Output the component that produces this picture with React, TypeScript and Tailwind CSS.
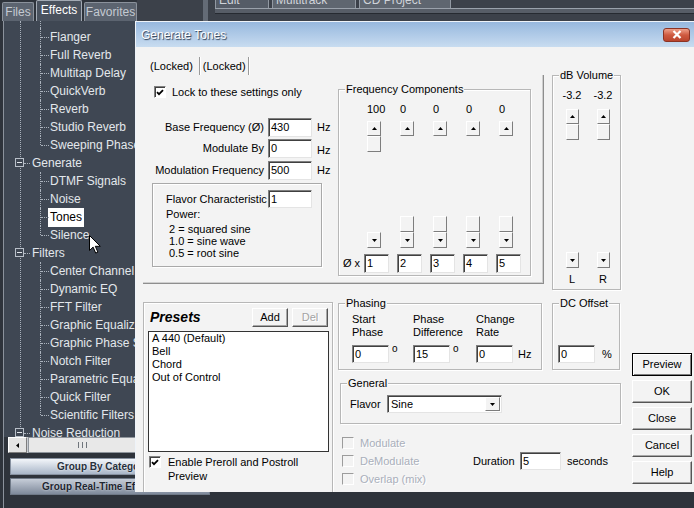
import React from 'react';

type Kids = { children?: React.ReactNode; className?: string };

function Arrow({ down = false }: { down?: boolean }) {
  return (
    <svg width="5" height="3" viewBox="0 0 5 3">
      <path d={down ? 'M0 0h5L2.5 3z' : 'M0 3h5L2.5 0z'} fill="#000" />
    </svg>
  );
}

function Raised({ children, className = '' }: Kids) {
  return (
    <div className={`flex items-center justify-center border border-t-white border-l-white border-r-[#7d7d7d] border-b-[#7d7d7d] bg-[#f3f3f3] ${className}`}>
      {children}
    </div>
  );
}

function PushButton({ children, className = '', isDefault = false, disabled = false }: Kids & { isDefault?: boolean; disabled?: boolean }) {
  const frame = isDefault
    ? 'border-black shadow-[inset_1px_1px_0_#fff,inset_-1px_-1px_0_#7d7d7d]'
    : 'border-t-white border-l-white border-r-[#555] border-b-[#555] shadow-[inset_-1px_-1px_0_#a8a8a8]';
  return (
    <div className={`flex items-center justify-center border bg-[#f3f3f3] ${frame} ${disabled ? 'text-[#a3a3a3] [text-shadow:1px_1px_0_#fff]' : ''} ${className}`}>
      {children}
    </div>
  );
}

function Field({ value, className = '' }: { value: string; className?: string }) {
  return (
    <div className={`border border-t-[#7f7f7f] border-l-[#7f7f7f] border-r-[#e4e4e4] border-b-[#e4e4e4] bg-white pl-[2px] leading-[16px] shadow-[inset_1px_1px_0_#404040] ${className}`}>
      {value}
    </div>
  );
}

function Check({ checked = false, disabled = false }: { checked?: boolean; disabled?: boolean }) {
  return (
    <div
      className={`flex h-[12px] w-[12px] shrink-0 items-center justify-center border ${
        disabled
          ? 'border-t-[#9c9c9c] border-l-[#9c9c9c] border-r-white border-b-white bg-[#f3f3f3]'
          : 'border-t-[#808080] border-l-[#808080] border-r-white border-b-white bg-white shadow-[inset_1px_1px_0_#404040]'
      }`}
    >
      {checked && (
        <svg width="8" height="7" viewBox="0 0 8 7">
          <path d="M1 3.2l2 2 4-4" stroke="#000" strokeWidth="1.8" fill="none" />
        </svg>
      )}
    </div>
  );
}

function Group({ label, className = '', children }: Kids & { label?: string }) {
  return (
    <div className={`relative border border-[#b7b7b7] shadow-[inset_1px_1px_0_#fff,1px_1px_0_#fff] ${className}`}>
      {label && <span className="absolute left-[6px] top-[-8px] bg-[#f3f3f3] px-[1px] leading-[14px]">{label}</span>}
      {children}
    </div>
  );
}

function Slider({ thumbTop = false, className = '' }: { thumbTop?: boolean; className?: string }) {
  return (
    <div className={`flex flex-col ${className}`}>
      <Raised className="h-[15px]">
        <Arrow />
      </Raised>
      <div className={`flex flex-1 flex-col ${thumbTop ? 'justify-start' : 'justify-end'}`}>
        <Raised className="h-[16px]" />
      </div>
      <Raised className="h-[16px]">
        <Arrow down />
      </Raised>
    </div>
  );
}

type Row = { t: string; g?: boolean; last?: boolean; sel?: boolean };

const rows: Row[] = [
  { t: 'Flanger' },
  { t: 'Full Reverb' },
  { t: 'Multitap Delay' },
  { t: 'QuickVerb' },
  { t: 'Reverb' },
  { t: 'Studio Reverb' },
  { t: 'Sweeping Phase', last: true },
  { t: 'Generate', g: true },
  { t: 'DTMF Signals' },
  { t: 'Noise' },
  { t: 'Tones', sel: true },
  { t: 'Silence', last: true },
  { t: 'Filters', g: true },
  { t: 'Center Channel' },
  { t: 'Dynamic EQ' },
  { t: 'FFT Filter' },
  { t: 'Graphic Equalizer' },
  { t: 'Graphic Phase Shifter' },
  { t: 'Notch Filter' },
  { t: 'Parametric Equalizer' },
  { t: 'Quick Filter' },
  { t: 'Scientific Filters', last: true },
  { t: 'Noise Reduction', g: true },
];

function Tree() {
  return (
    <div className="relative h-[416px] shrink-0 overflow-hidden bg-[#3f4753] pt-[7px] text-[12px] text-[#e3e7ec]">
      <span className="absolute bottom-0 left-[16px] top-0 border-l border-dotted border-[#aab2bc]" />
      <span className="absolute left-[36px] top-0 h-[7px] border-l border-dotted border-[#aab2bc]" />
      {rows.map((r) =>
        r.g ? (
          <div key={r.t} className="relative flex h-[18px] items-center whitespace-nowrap pl-[28px]">
            <span className="absolute left-[11px] top-[4px] flex h-[9px] w-[9px] items-center justify-center border border-[#b9c0c9] bg-[#3f4753]">
              <span className="h-px w-[5px] bg-[#e3e7ec]" />
            </span>
            <span className="absolute left-[20px] top-[9px] w-[6px] border-t border-dotted border-[#aab2bc]" />
            {r.t}
          </div>
        ) : (
          <div key={r.t} className="relative flex h-[18px] items-center whitespace-nowrap pl-[46px]">
            <span className={`absolute left-[36px] top-0 border-l border-dotted border-[#aab2bc] ${r.last ? 'h-[9px]' : 'h-full'}`} />
            <span className="absolute left-[37px] top-[9px] w-[8px] border-t border-dotted border-[#aab2bc]" />
            {r.sel ? (
              <span className="-ml-[2px] bg-white px-[2px] leading-[19px] text-black">{r.t}</span>
            ) : (
              r.t
            )}
          </div>
        )
      )}
      <svg className="absolute left-[85px] top-[214px]" width="13" height="19" viewBox="0 0 13 19">
        <path d="M0.5 0.5v15l3.6-3.4 2.6 6 2.2-1-2.6-5.8h5z" fill="#fff" stroke="#000" strokeWidth="1" />
      </svg>
    </div>
  );
}

function LeftPanel() {
  return (
    <div className="flex w-[137px] shrink-0 flex-col">
      <div className="flex h-[21px] shrink-0 items-end text-[12px]">
        <div className="ml-[2px] h-[19px] w-[32px] rounded-t-[2px] border border-b-0 border-[#8b929c] bg-[#5c6470] text-center leading-[18px] text-[#c4cad2]">
          Files
        </div>
        <div className="ml-[2px] h-[21px] w-[46px] rounded-t-[2px] border border-b-0 border-[#a3aab4] bg-[#4a525e] text-center leading-[19px] text-white">
          Effects
        </div>
        <div className="ml-[2px] h-[19px] w-[53px] rounded-t-[2px] border border-b-0 border-[#8b929c] bg-[#5c6470] text-center leading-[18px] text-[#c4cad2]">
          Favorites
        </div>
      </div>
      <div className="ml-[3px] flex flex-1 flex-col border-l border-[#8b929c]">
        <Tree />
        <div className="ml-[4px] flex h-[16px] shrink-0 bg-[#c9cdd3]">
          <div className="flex w-[19px] items-center justify-center border border-t-white border-l-white border-r-[#7d7d7d] border-b-[#7d7d7d] bg-[#e4e4e4]">
            <svg width="3" height="5" viewBox="0 0 3 5">
              <path d="M3 0v5L0 2.5z" fill="#000" />
            </svg>
          </div>
          <div className="ml-px flex flex-1 items-center justify-center gap-[1px] border border-[#8f959c] bg-[#e8e8e8]">
            <span className="h-[6px] w-px bg-[#6f757c]" />
            <span className="h-[6px] w-px bg-[#e8e8e8]" />
            <span className="h-[6px] w-px bg-[#6f757c]" />
            <span className="h-[6px] w-px bg-[#e8e8e8]" />
            <span className="h-[6px] w-px bg-[#6f757c]" />
          </div>
        </div>
        <div className="ml-[6px] mt-[5px] h-[17px] w-[200px] shrink-0 border border-[#8791a0] bg-linear-to-b from-[#f3f6fa] to-[#a9b6c8] pl-[46px] text-[10px] font-bold leading-[15px] text-[#27303c] [text-shadow:0_0_2px_#fff]">
          Group By Category
        </div>
        <div className="ml-[6px] mt-[3px] h-[17px] w-[200px] shrink-0 border border-[#6f7987] bg-linear-to-b from-[#c6cdd8] to-[#7f8a9b] pl-[31px] text-[10px] font-bold leading-[15px] text-[#1f2631] [text-shadow:0_0_2px_#dfe4ea]">
          Group Real-Time Effects
        </div>
      </div>
    </div>
  );
}

function TopArea() {
  return (
    <div className="flex h-[21px] flex-1 bg-[#3c414a]">
      <div className="ml-[66px] w-[5px] bg-[#646b76]" />
      <div className="ml-[7px] flex flex-1 flex-col">
        <div className="flex h-[8px] items-end gap-[3px] overflow-hidden text-[12px] text-[#cfd3d9]">
          <div className="h-[8px] w-[54px] overflow-hidden border-x border-[#9299a3] bg-[#555c67] pl-[3px]">
            <div className="-mt-[7px] leading-[14px]">Edit View</div>
          </div>
          <div className="h-[8px] w-[84px] overflow-hidden border-x border-[#9299a3] bg-[#5f6670] pl-[3px]">
            <div className="-mt-[7px] leading-[14px]">Multitrack View</div>
          </div>
          <div className="h-[8px] w-[92px] overflow-hidden border-x border-[#9299a3] bg-[#5f6670] pl-[3px]">
            <div className="-mt-[7px] leading-[14px]">CD Project View</div>
          </div>
        </div>
        <div className="h-px bg-[#9aa1ab]" />
        <div className="h-[4px] bg-[#575d67]" />
        <div className="h-px bg-[#262a31]" />
      </div>
    </div>
  );
}

function LeftControls() {
  const rowsL = [
    { l: 'Base Frequency (Ø)', v: '430', mt: 'mt-[20px]' },
    { l: 'Modulate By', v: '0', mt: 'mt-[2px]' },
    { l: 'Modulation Frequency', v: '500', mt: 'mt-[3px]' },
  ];
  return (
    <div className="flex w-[195px] shrink-0 flex-col">
      <div className="ml-[11px] mt-[11px] flex h-[12px] items-center">
        <Check checked />
        <span className="ml-[6px] whitespace-nowrap">Lock to these settings only</span>
      </div>
      {rowsL.map((r) => (
        <div key={r.l} className={`flex h-[19px] items-center ${r.mt}`}>
          <span className="w-[121px] whitespace-nowrap text-right">{r.l}</span>
          <Field value={r.v} className="ml-[4px] h-[19px] w-[44px]" />
          <span className={`ml-[5px] ${r.l === 'Modulate By' ? 'mt-[4px]' : ''}`}>Hz</span>
        </div>
      ))}
      <div className="ml-[9px] mt-[3px] h-[84px] w-[170px] border border-[#a9a9a9] pl-[13px] pt-[6px] shadow-[inset_1px_1px_0_#fff,1px_1px_0_#fff]">
        <div className="flex h-[18px] items-center">
          <span className="w-[102px] whitespace-nowrap">Flavor Characteristic</span>
          <Field value="1" className="h-[18px] w-[44px]" />
        </div>
        <div className="leading-[13px]">Power:</div>
        <div className="mt-[2px] pl-[3px] leading-[12px]">
          <div>2 = squared sine</div>
          <div>1.0 = sine wave</div>
          <div>0.5 = root sine</div>
        </div>
      </div>
    </div>
  );
}

function FreqGroup() {
  const vals = ['100', '0', '0', '0', '0'];
  return (
    <Group label="Frequency Components" className="mt-[14px] h-[187px] w-[193px] shrink-0">
      <div className="flex gap-[19px] pl-[28px] pt-[13px]">
        {vals.map((v, i) => (
          <div key={i} className="flex w-[14px] flex-col">
            <div className="h-[13px] whitespace-nowrap leading-[13px]">{v}</div>
            <Slider thumbTop={i === 0} className="mt-[5px] h-[127px] w-[14px]" />
          </div>
        ))}
      </div>
      <div className="mt-[6px] flex items-center pl-[4px]">
        <span className="w-[21px] whitespace-nowrap">Ø x</span>
        <div className="flex gap-[8px]">
          {['1', '2', '3', '4', '5'].map((n) => (
            <Field key={n} value={n} className="h-[19px] w-[25px]" />
          ))}
        </div>
      </div>
    </Group>
  );
}

function VolumeGroup() {
  return (
    <Group label="dB Volume" className="ml-[8px] h-[215px] w-[69px] shrink-0">
      <div className="flex gap-[9px] pl-[8px] pt-[13px]">
        {['L', 'R'].map((c) => (
          <div key={c} className="flex w-[22px] flex-col items-center">
            <div className="h-[13px] leading-[13px]">-3.2</div>
            <Slider thumbTop className="mt-[7px] h-[159px] w-[13px]" />
            <div className="mt-[5px] h-[13px] leading-[13px]">{c}</div>
          </div>
        ))}
      </div>
    </Group>
  );
}

function Presets() {
  return (
    <Group className="h-[196px] w-[190px] shrink-0">
      <div className="mt-[5px] flex h-[19px] items-center pr-[4px]">
        <span className="flex-1 pl-[6px] text-[14px] font-bold italic">Presets</span>
        <PushButton className="h-[19px] w-[36px]">Add</PushButton>
        <PushButton disabled className="ml-[4px] h-[19px] w-[36px]">
          Del
        </PushButton>
      </div>
      <div className="ml-[4px] mt-[4px] h-[121px] w-[181px] border border-[#333] bg-white pl-[3px] leading-[13px]">
        <div>A 440 (Default)</div>
        <div>Bell</div>
        <div>Chord</div>
        <div>Out of Control</div>
      </div>
      <div className="ml-[5px] mt-[4px] flex items-start">
        <Check checked />
        <div className="ml-[7px] -mt-px leading-[14px]">
          <div>Enable Preroll and Postroll</div>
          <div>Preview</div>
        </div>
      </div>
    </Group>
  );
}

function PhaseCol({ a, b, v, sym, w }: { a: string; b: string; v: string; sym: string; w: string }) {
  return (
    <div className={`flex flex-col ${w}`}>
      <div className="leading-[13px]">
        <div>{a}</div>
        <div>{b}</div>
      </div>
      <div className="mt-[6px] flex items-center">
        <Field value={v} className="h-[18px] w-[37px]" />
        {sym === 'o' ? (
          <span className="ml-[3px] self-start text-[10px] leading-[8px]">o</span>
        ) : (
          <span className="ml-[5px]">{sym}</span>
        )}
      </div>
    </div>
  );
}

function Middle() {
  return (
    <div className="ml-[5px] flex w-[283px] shrink-0 flex-col">
      <div className="mt-[1px] flex">
        <Group label="Phasing" className="h-[67px] w-[204px] shrink-0">
          <div className="flex pl-[13px] pt-[9px]">
            <PhaseCol a="Start" b="Phase" v="0" sym="o" w="w-[61px]" />
            <PhaseCol a="Phase" b="Difference" v="15" sym="o" w="w-[63px]" />
            <PhaseCol a="Change" b="Rate" v="0" sym="Hz" w="w-[60px]" />
          </div>
        </Group>
        <Group label="DC Offset" className="ml-[10px] h-[67px] w-[68px] shrink-0">
          <div className="flex items-center pl-[5px] pt-[41px]">
            <Field value="0" className="h-[18px] w-[37px]" />
            <span className="ml-[7px]">%</span>
          </div>
        </Group>
      </div>
      <Group label="General" className="ml-[2px] mt-[13px] h-[41px] w-[281px] shrink-0">
        <div className="flex items-center pl-[9px] pt-[11px]">
          <span className="w-[37px]">Flavor</span>
          <div className="flex h-[18px] w-[115px] border border-t-[#7f7f7f] border-l-[#7f7f7f] border-r-[#e4e4e4] border-b-[#e4e4e4] bg-white shadow-[inset_1px_1px_0_#404040]">
            <span className="flex-1 pl-[3px] leading-[16px]">Sine</span>
            <Raised className="my-px mr-px w-[15px]">
              <Arrow down />
            </Raised>
          </div>
        </div>
      </Group>
      <div className="mt-[10px] flex items-center">
        <div className="flex w-[135px] shrink-0 flex-col pl-[4px] text-[#a9afbb] [text-shadow:1px_1px_0_#fff]">
          {['Modulate', 'DeModulate', 'Overlap (mix)'].map((t) => (
            <div key={t} className="flex h-[18px] items-center">
              <Check disabled />
              <span className="ml-[6px]">{t}</span>
            </div>
          ))}
        </div>
        <span className="w-[47px]">Duration</span>
        <Field value="5" className="h-[18px] w-[41px]" />
        <span className="ml-[6px]">seconds</span>
      </div>
    </div>
  );
}

function Dialog() {
  return (
    <div className="absolute left-[135px] top-[21px] flex h-[471px] w-[559px] flex-col overflow-hidden border-l border-t border-[#eef3f9] font-['Liberation_Sans',Arial,sans-serif] text-[11px] text-black">
      <div className="flex h-[25px] shrink-0 items-center bg-linear-to-b from-[#97b8de] to-[#c8dcf0]">
        <span className="pl-[5px] text-[12px] text-white [text-shadow:1px_1px_1px_#24344b]">Generate Tones</span>
        <div className="ml-auto mr-[4px] flex h-[14px] w-[27px] items-center justify-center rounded-[3px] border border-[#8c3324] bg-linear-to-b from-[#eea08a] via-[#cf5a40] to-[#b9442d]">
          <svg width="10" height="9" viewBox="0 0 10 9">
            <path d="M1.5 1l7 7M8.5 1l-7 7" stroke="#fff" strokeWidth="2.2" />
          </svg>
        </div>
      </div>
      <div className="flex-1 overflow-hidden bg-[#f3f3f3] pl-[7px] pt-[10px]">
        <div className="flex h-[18px] items-stretch">
          <span className="ml-[7px] leading-[18px]">(Locked)</span>
          <span className="ml-[6px] w-[2px] border-l border-r border-l-[#9a9a9a] border-r-white" />
          <span className="ml-[2px] leading-[18px]">(Locked)</span>
          <span className="ml-[2px] w-[2px] border-l border-r border-l-[#9a9a9a] border-r-white" />
        </div>
        <div className="flex items-start">
          <div className="flex h-[209px] w-[401px] shrink-0 border-b border-r border-[#8e8e8e] shadow-[inset_-1px_-1px_0_#cfcfcf]">
            <LeftControls />
            <FreqGroup />
          </div>
          <VolumeGroup />
        </div>
        <div className="mt-[12px] flex items-start">
          <Presets />
          <Middle />
          <div className="ml-[11px] mt-[51px] flex w-[60px] shrink-0 flex-col gap-[4px]">
            <PushButton isDefault className="h-[23px]">Preview</PushButton>
            <PushButton className="h-[23px]">OK</PushButton>
            <PushButton className="h-[23px]">Close</PushButton>
            <PushButton className="h-[23px]">Cancel</PushButton>
            <PushButton className="h-[23px]">Help</PushButton>
          </div>
        </div>
      </div>
    </div>
  );
}

export default function App() {
  return (
    <div className="relative flex h-[508px] w-[694px] items-start overflow-hidden bg-[#2e333b] font-['Liberation_Sans',Arial,sans-serif]">
      <div className="flex h-[508px] w-[137px] shrink-0">
        <LeftPanel />
      </div>
      <TopArea />
      <Dialog />
    </div>
  );
}
